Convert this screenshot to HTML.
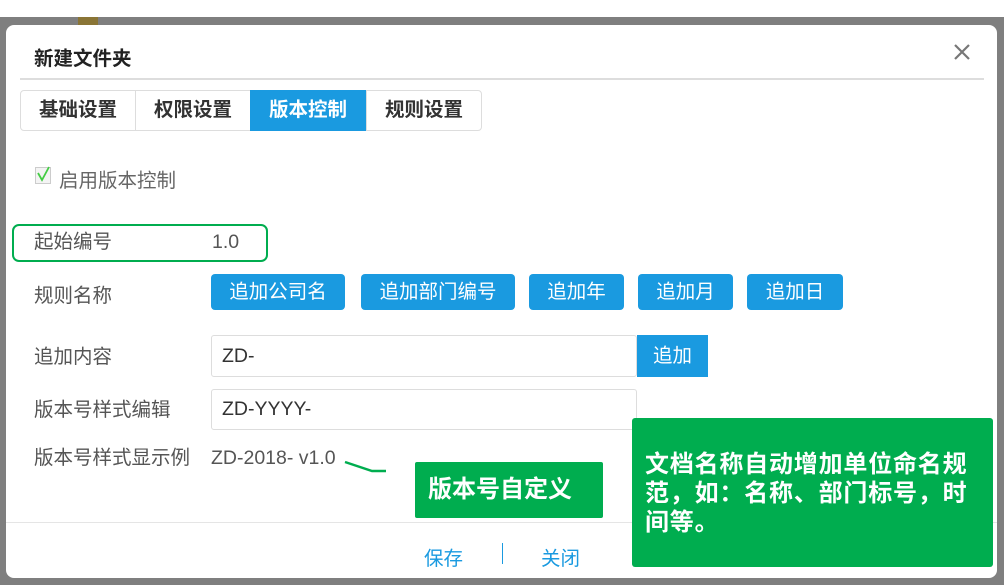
<!DOCTYPE html>
<html><head><meta charset="utf-8"><style>
*{margin:0;padding:0;box-sizing:border-box}
body{width:1004px;height:585px;position:relative;overflow:hidden;background:#fff;font-family:"Liberation Sans","Noto Sans CJK SC",sans-serif}
.ov{position:absolute;left:0;top:17px;width:1004px;height:568px;background:#7f7f7f}
.bgt{position:absolute;left:78px;top:17px;width:20px;height:10px;background:#8a7536}
.modal{position:absolute;left:6px;top:25px;width:991px;height:553px;background:#fff;border-radius:8px}
.a{position:absolute;white-space:nowrap}
.lbl{font-size:19.5px;color:#555;line-height:22px}
.btn{position:absolute;top:274px;height:36px;background:#1a9ae0;color:#fff;border-radius:4px;font-size:19.5px;line-height:36px;text-align:center}
.inp{position:absolute;left:211px;width:426px;border:1px solid #ddd;border-radius:3px;font-size:19.5px;color:#333;padding-left:10px}
.tab{position:absolute;top:90px;height:41px;font-size:19.5px;font-weight:bold;color:#333;line-height:41px;text-align:center;border-left:1px solid #ddd}
.g{background:#00ad4f;color:#fff;font-weight:bold;position:absolute}
</style></head><body>
<div class="ov"></div>
<div class="bgt"></div>
<div class="modal"></div>
<div class="a" style="left:34px;top:42px;font-size:19.5px;font-weight:bold;color:#222">新建文件夹</div>
<svg class="a" style="left:953px;top:43px" width="18" height="18"><path d="M2 2L16 16M16 2L2 16" stroke="#777" stroke-width="2.2"/></svg>
<div class="a" style="left:20px;top:78px;width:964px;height:2px;background:#ddd"></div>
<div class="a" style="left:20px;top:90px;width:462px;height:41px;border:1px solid #ddd;border-radius:4px"></div>
<div class="tab" style="left:21px;width:114px;border-left:none">基础设置</div>
<div class="tab" style="left:135px;width:115px">权限设置</div>
<div class="tab" style="left:250px;width:116px;background:#1a9ae0;color:#fff;border-left:none">版本控制</div>
<div class="tab" style="left:366px;width:115px">规则设置</div>
<div class="a" style="left:35px;top:167px;width:16px;height:17px;border:1px solid #ccc;background:#f4f4f4"></div>
<svg class="a" style="left:36px;top:166px" width="16" height="16"><path d="M2 7L6 14L13 1" fill="none" stroke="#4c4" stroke-width="1.8"/></svg>
<div class="a lbl" style="left:59px;top:170px;color:#666">启用版本控制</div>
<div class="a" style="left:12px;top:224px;width:256px;height:38px;border:2px solid #00ad4f;border-radius:7px"></div>
<div class="a lbl" style="left:34px;top:231px">起始编号</div>
<div class="a lbl" style="left:212px;top:231px">1.0</div>
<div class="a lbl" style="left:34px;top:285px">规则名称</div>
<div class="btn" style="left:211px;width:134px">追加公司名</div>
<div class="btn" style="left:361px;width:154px">追加部门编号</div>
<div class="btn" style="left:529px;width:95px">追加年</div>
<div class="btn" style="left:638px;width:95px">追加月</div>
<div class="btn" style="left:747px;width:96px">追加日</div>
<div class="a lbl" style="left:34px;top:346px">追加内容</div>
<div class="inp" style="top:335px;height:42px;line-height:40px">ZD-</div>
<div class="a" style="left:637px;top:335px;width:71px;height:42px;background:#1a9ae0;color:#fff;font-size:19.5px;line-height:42px;text-align:center">追加</div>
<div class="a lbl" style="left:34px;top:399px">版本号样式编辑</div>
<div class="inp" style="top:389px;height:41px;line-height:39px">ZD-YYYY-</div>
<div class="a lbl" style="left:34px;top:447px">版本号样式显示例</div>
<div class="a lbl" style="left:211px;top:447px">ZD-2018- v1.0</div>
<svg class="a" style="left:340px;top:455px" width="50" height="25"><polyline points="5,7 32,16 46,16" fill="none" stroke="#00ad4f" stroke-width="2.5"/></svg>
<div class="a" style="left:6px;top:522px;width:991px;height:1px;background:#e5e5e5"></div>
<div class="a" style="left:424px;top:542px;font-size:19.5px;color:#1a9ae0">保存</div>
<div class="a" style="left:502px;top:543px;width:1px;height:21px;background:#1a9ae0"></div>
<div class="a" style="left:541px;top:542px;font-size:19.5px;color:#1a9ae0">关闭</div>
<div class="g" style="left:415px;top:462px;width:188px;height:56px;line-height:56px;padding-left:13px;border-radius:2px;font-size:24px">版本号自定义</div>
<div class="g" style="left:632px;top:418px;width:361px;height:149px;padding:32px 0 0 13px;line-height:29px;border-radius:3px;font-size:24px;letter-spacing:0.8px">文档名称自动增加单位命名规<br>范，如：名称、部门标号，时<br>间等。</div>
</body></html>
